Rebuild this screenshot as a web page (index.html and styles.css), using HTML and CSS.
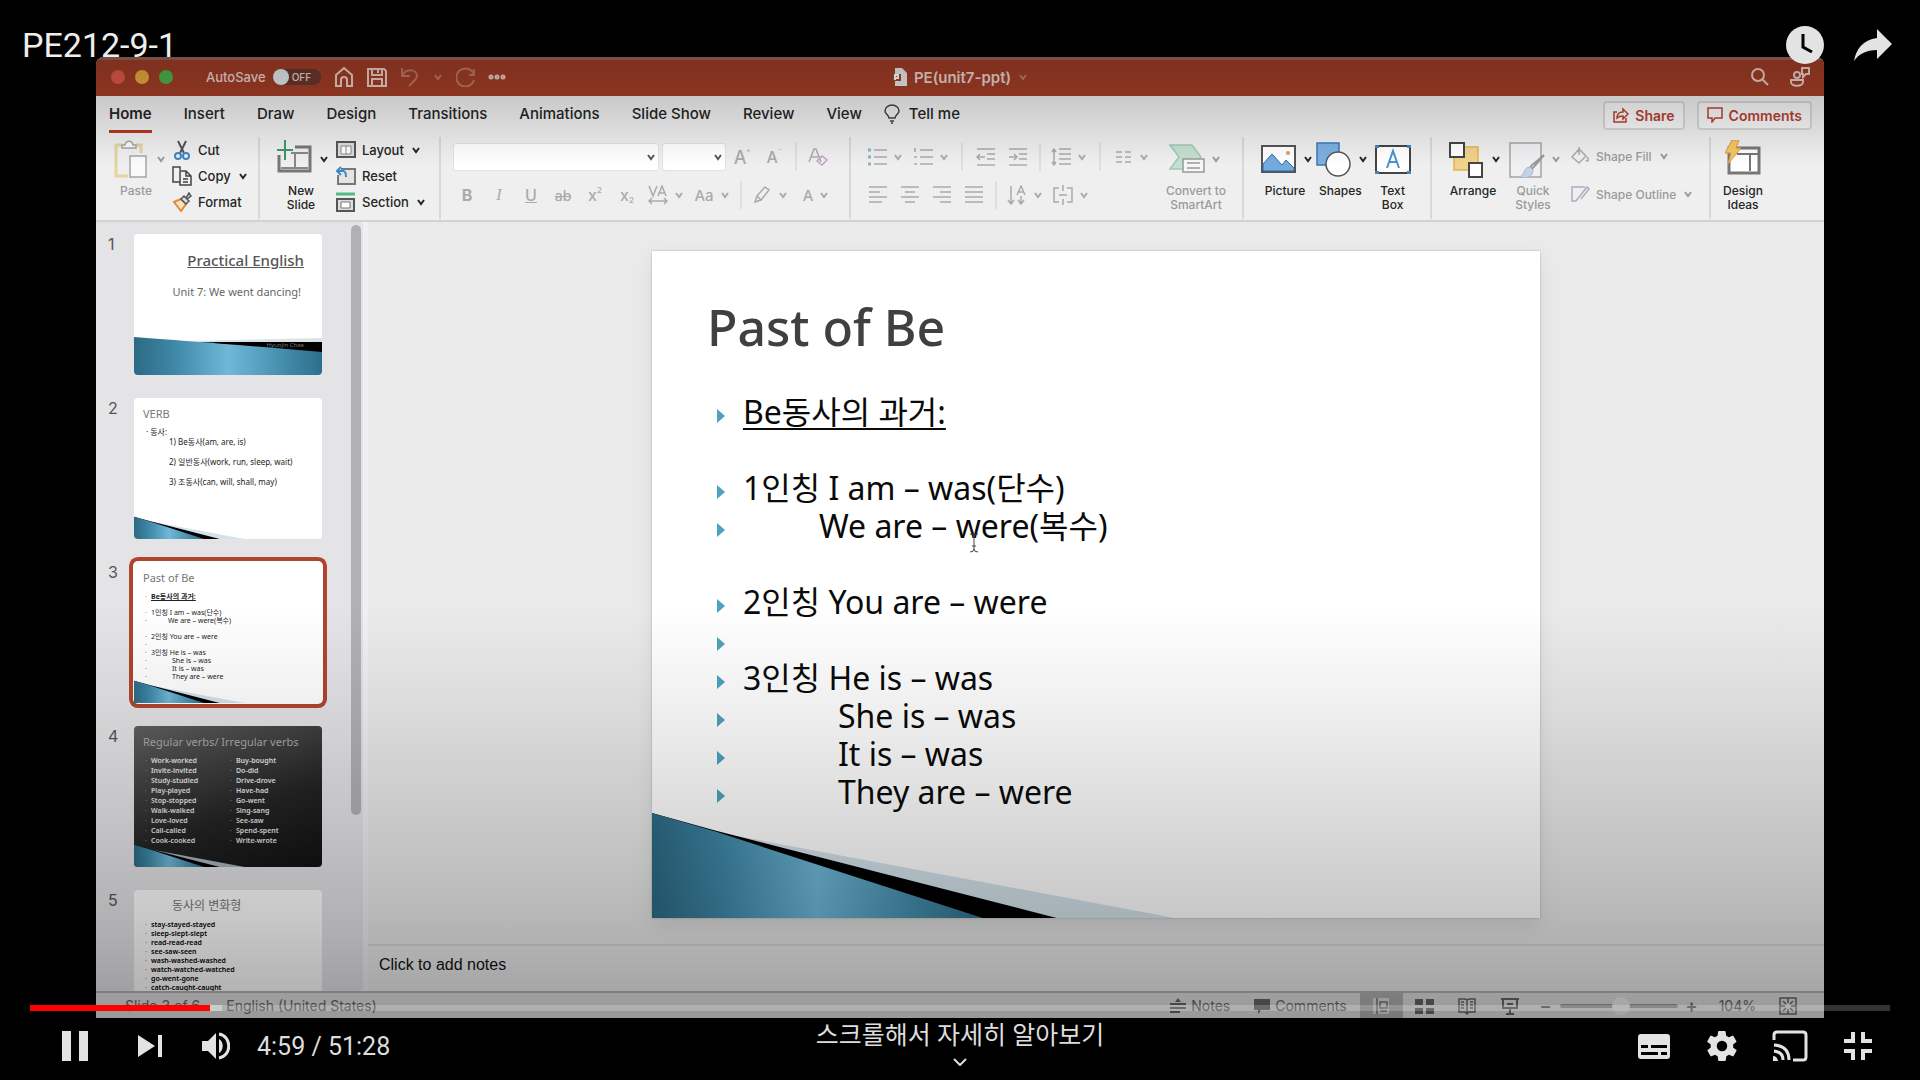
FILE: index.html
```html
<!DOCTYPE html>
<html lang="ko">
<head>
<meta charset="utf-8">
<title>PE212-9-1</title>
<link rel="stylesheet" href="styles.css">
</head>
<body>
<svg class="defs" aria-hidden="true">
  <symbol id="chev" viewBox="0 0 10 10"><path d="M2 3l3 4 3-4" fill="none" stroke="currentColor" stroke-width="2"/></symbol>
  <linearGradient id="sea"><stop offset="0" stop-color="#2c6a84"/><stop offset=".22" stop-color="#3f88a8"/><stop offset=".5" stop-color="#70b8d8"/><stop offset=".8" stop-color="#438caa"/><stop offset="1" stop-color="#2c6f8c"/></linearGradient>
  <symbol id="wedge" viewBox="0 0 888 667" preserveAspectRatio="none">
    <path d="M80 584L523 667H300z" fill="#c9dbe6" opacity=".8"/>
    <path d="M0 562L65 580L405 667H300L0 570z" fill="#000"/>
    <path d="M0 562L65 581L331 667H0z" fill="url(#sea)"/>
  </symbol>
</svg>
<main class="player">
  <section class="app">
    <header class="titlebar">
      <div class="left">
        <div class="lights"><i class="red"></i><i class="amber"></i><i class="green"></i></div>
        <div class="quick">
          <span class="autosave">AutoSave</span>
          <button class="toggle"><i></i>OFF</button>
          <svg class="i20 home" viewBox="0 0 20 20"><path d="M2 8l8-7 8 7v11h-5v-6a3 3 0 0 0-6 0v6H2z"/></svg>
          <svg class="i20" viewBox="0 0 20 20"><path d="M1 2h16l2 2v15H1zM5 2v6h10V2M5 19v-7h10v7M11 3v3"/></svg>
          <svg class="i20 dim undo" viewBox="0 0 20 20"><path d="M2 1v8h8M2 9c4-8 15-7 15 0 0 3-4 6-8 10"/></svg>
          <svg class="chev dim"><use href="#chev"/></svg>
          <svg class="i20 dim redo" viewBox="0 0 20 20"><path d="M18 2v6h-5M18 8a9 9 0 1 0 0 5"/></svg>
          <svg class="i20 dots" viewBox="0 0 20 20"><circle cx="4" cy="10" r="1"/><circle cx="10" cy="10" r="1"/><circle cx="16" cy="10" r="1"/></svg>
        </div>
      </div>
      <div class="doc">
        <svg class="docicon" viewBox="0 0 14 20"><path d="M2 1h7l5 5v13H2z" fill="#eee"/><path d="M0 7h8v7H0z" fill="#a8482e"/><path d="M2 13V8h3v3H2" fill="none" stroke="#fff"/></svg>
        <span>PE(unit7-ppt)</span><svg class="chev dim"><use href="#chev"/></svg>
      </div>
      <div class="find">
        <svg class="i20" viewBox="0 0 20 20"><circle cx="8" cy="8" r="6"/><path d="M12 12l6 6"/></svg>
        <svg class="i20" viewBox="0 0 20 20"><circle cx="7" cy="8" r="3"/><path d="M1 13h12v2c0 5-12 5-12 0zM12 1h7v6h-3l-3 3V7h-1z"/></svg>
      </div>
    </header>

    <nav class="tabs">
      <a href="#" class="on">Home</a><a href="#">Insert</a><a href="#">Draw</a><a href="#">Design</a><a href="#">Transitions</a><a href="#">Animations</a><a href="#">Slide Show</a><a href="#">Review</a><a href="#">View</a>
      <a href="#" class="tell"><svg class="bulb" viewBox="0 0 16 20"><path d="M5 14c0-3-4-4-4-7a7 6 0 0 1 14 0c0 3-4 4-4 7zM6 17h4M7 19h2"/></svg>Tell me</a>
      <div class="actions">
        <button><svg class="i16" viewBox="0 0 16 16"><path d="M4 5H1v10h12v-4M4 11c0-5 3-6 6-6V2l5 5-5 5V9C8 9 6 9 4 11z"/></svg>Share</button>
        <button><svg class="i16" viewBox="0 0 16 16"><path d="M1 1h14v10H8l-3 4v-4H1z"/></svg>Comments</button>
      </div>
    </nav>

    <div class="ribbon">
      <div class="group clip">
        <button class="big pale paste"><span class="art"><svg viewBox="0 0 36 38"><path d="M8 5H2v31h12M22 5h5v8" fill="none" stroke="#e3d4a0" stroke-width="3"/><path d="M8 8V5h3c1-5 7-5 8 0h3v3zM16 16h16v21H16z" fill="#fafafa" stroke="#a5a5a5" stroke-width="1.5"/></svg><svg class="chev"><use href="#chev"/></svg></span><span>Paste</span></button>
        <div class="stack">
          <button><svg viewBox="0 0 20 20"><path d="M6 1l6 12M14 1L8 13" fill="none" stroke="#555" stroke-width="2"/><circle cx="6" cy="16" r="3" fill="none" stroke="#3f86c4" stroke-width="2"/><circle cx="14" cy="16" r="3" fill="none" stroke="#3f86c4" stroke-width="2"/></svg>Cut</button>
          <button><svg viewBox="0 0 20 20"><path d="M8 16H1V1h7v3M8 5h6l5 5v9H8zM14 5v5h5M11 13h5M11 16h5" fill="none" stroke="#444" stroke-width="1.5"/></svg>Copy<svg class="chev"><use href="#chev"/></svg></button>
          <button><svg viewBox="0 0 20 20"><path d="M2 10l7-3 5 5-5 7z" fill="#fbe0c4" stroke="#e08b3e" stroke-width="2"/><path d="M9 7l3-3 2 2 3-5 2 3-4 3 2 2-3 3z" fill="#ddd" stroke="#555" stroke-width="1.5"/></svg>Format</button>
        </div>
      </div>
      <div class="group slides">
        <button class="big"><span class="art"><svg viewBox="0 0 36 38"><path d="M18 7h15v24H2V15" fill="none" stroke="#777" stroke-width="3"/><path d="M14 13h17M18 14v15M4 28h27" stroke="#888" stroke-width="2"/><path d="M8 0v20M0 10h16" stroke="#3c9a68" stroke-width="2"/></svg><svg class="chev"><use href="#chev"/></svg></span><span>New<br>Slide</span></button>
        <div class="stack">
          <button><svg viewBox="0 0 20 20"><path d="M1 2h18v15H1z" fill="#ddd" stroke="#555" stroke-width="2"/><path d="M5 6h10v8H5zM10 6v8" fill="#fff" stroke="#888"/></svg>Layout<svg class="chev"><use href="#chev"/></svg></button>
          <button><svg viewBox="0 0 20 20"><path d="M5 3h14v15H2V9" fill="#e4e4e4" stroke="#777" stroke-width="2"/><path d="M5 1L1 5l4 4M1 5h6c3 0 3 3 3 6" fill="none" stroke="#3f86c4" stroke-width="2"/></svg>Reset</button>
          <button><svg viewBox="0 0 20 20"><path d="M0 2h19" stroke="#58b883" stroke-width="3"/><path d="M1 7h17v12H1z" fill="#ddd" stroke="#555" stroke-width="2"/><path d="M5 10h9v6H5z" fill="#fff" stroke="#777"/></svg>Section<svg class="chev"><use href="#chev"/></svg></button>
        </div>
      </div>
      <div class="group font pale">
        <div class="row">
          <span class="combo name"><select aria-label="Font"><option></option></select><svg class="chev"><use href="#chev"/></svg></span>
          <span class="combo size"><select aria-label="Font size"><option></option></select><svg class="chev"><use href="#chev"/></svg></span>
          <button class="t large">A<sup>^</sup></button><button class="t">A<sup>ˇ</sup></button><i class="sep"></i>
          <button class="t"><svg viewBox="0 0 20 20"><path d="M1 15L6 2h2l5 13M3 10h7"/><path d="M9 14l5-5 5 4-5 5z" stroke="#c3a2c8"/></svg></button>
        </div>
        <div class="row">
          <button class="t"><b>B</b></button><button class="t serif"><em>I</em></button><button class="t"><u>U</u></button><button class="t small"><s>ab</s></button><button class="t">x<sup>2</sup></button><button class="t">x<sub>2</sub></button>
          <button class="d"><svg class="ic" viewBox="0 0 20 20"><path d="M1 1l4 10L9 1M10 11l4-10 4 10M11 8h6M1 16h18M4 13l-3 3 3 3M16 13l3 3-3 3"/></svg><svg class="chev"><use href="#chev"/></svg></button>
          <button class="d">Aa<svg class="chev"><use href="#chev"/></svg></button><i class="sep"></i>
          <button class="d"><svg class="ic" viewBox="0 0 20 20"><path d="M3 17l2-6 8-9 4 3-8 10zM5 11l4 4"/></svg><svg class="chev"><use href="#chev"/></svg></button>
          <button class="d">A<svg class="chev"><use href="#chev"/></svg></button>
        </div>
      </div>
      <div class="group para pale">
        <div class="rows">
          <div class="row">
            <button class="d"><svg class="ic" viewBox="0 0 20 20"><path d="M7 3h13M7 10h13M7 17h13"/><path d="M1 3h3M1 10h3M1 17h3" stroke="#8bb5bd" stroke-width="3"/></svg><svg class="chev"><use href="#chev"/></svg></button>
            <button class="d"><svg class="ic" viewBox="0 0 20 20"><path d="M7 3h13M7 10h13M7 17h13M2 1v4M1 10h3M1 17h3"/></svg><svg class="chev"><use href="#chev"/></svg></button><i class="sep wide"></i>
            <button class="t"><svg viewBox="0 0 20 20"><path d="M1 2h18M11 7h8M11 12h8M1 18h18M9 10H1M4 7l-3 3 3 3"/></svg></button>
            <button class="t"><svg viewBox="0 0 20 20"><path d="M1 2h18M11 7h8M11 12h8M1 18h18M1 10h8M6 7l3 3-3 3"/></svg></button><i class="sep"></i>
            <button class="d"><svg class="ic" viewBox="0 0 20 20"><path d="M8 2h12M8 7h12M8 12h12M8 17h12M3 2v16M1 5l2-3 2 3M1 15l2 3 2-3"/></svg><svg class="chev"><use href="#chev"/></svg></button><i class="sep wide"></i>
            <button class="d"><svg class="ic" viewBox="0 0 20 20"><path d="M3 5h6M3 10h6M3 15h6M12 5h6M12 10h6M12 15h6"/></svg><svg class="chev"><use href="#chev"/></svg></button>
          </div>
          <div class="row aligns">
            <button class="t"><svg viewBox="0 0 20 20"><path d="M1 2h18M1 7h11M1 12h18M1 17h13"/></svg></button>
            <button class="t"><svg viewBox="0 0 20 20"><path d="M1 2h18M5 7h10M1 12h18M5 17h10"/></svg></button>
            <button class="t"><svg viewBox="0 0 20 20"><path d="M1 2h18M8 7h11M1 12h18M8 17h11"/></svg></button>
            <button class="t"><svg viewBox="0 0 20 20"><path d="M1 2h18M1 7h18M1 12h18M1 17h18"/></svg></button><i class="sep"></i>
            <button class="d"><svg class="ic" viewBox="0 0 20 20"><path d="M4 1v17M1 15l3 4 3-4M14 11v8M11 15l3 4 3-4M10 10l4-9 4 9M12 7h4"/></svg><svg class="chev"><use href="#chev"/></svg></button>
            <button class="d"><svg class="ic" viewBox="0 0 20 20"><path d="M6 3H1v14h5M14 3h5v14h-5M10 0v6M10 14v6M6 10h8"/></svg><svg class="chev"><use href="#chev"/></svg></button>
          </div>
        </div>
        <button class="big smart"><span class="art"><svg viewBox="0 0 36 38"><path d="M1 5h22l9 12-9 12H1l9-12z" fill="#c4e0d0" stroke="#9ec9b1" stroke-width="1.5"/><path d="M14 19h21v13H14zM18 23h13M18 28h13" fill="#f6f6f6" stroke="#999" stroke-width="1.5"/></svg><svg class="chev"><use href="#chev"/></svg></span><span>Convert to<br>SmartArt</span></button>
      </div>
      <div class="group insert">
        <button class="big"><span class="art"><svg viewBox="0 0 36 38"><path d="M1 6h33v26H1z" fill="#fff" stroke="#555" stroke-width="2"/><path d="M2 24l9-10 10 11 4-5 8 8v3H2z" fill="#72abdf" stroke="#2f6ba5"/><circle cx="27" cy="13" r="2" fill="#e09a55"/></svg><svg class="chev"><use href="#chev"/></svg></span><span>Picture</span></button>
        <button class="big"><span class="art"><svg viewBox="0 0 36 38"><path d="M1 3h22v22H1z" fill="#7db0e2" stroke="#3879b5" stroke-width="1.5"/><circle cx="22" cy="24" r="12" fill="#fff" stroke="#555" stroke-width="1.5"/></svg><svg class="chev"><use href="#chev"/></svg></span><span>Shapes</span></button>
        <button class="big solo"><span class="art"><svg viewBox="0 0 36 38"><path d="M1 6h34v27H1z" fill="#fff" stroke="#444" stroke-width="2"/><path d="M0 5h4v3H0zM32 5h4v3h-4zM0 31h4v3H0zM32 31h4v3h-4z" fill="#3f86c4"/><path d="M12 28l6-17 6 17M14 22h8" fill="none" stroke="#4991d0" stroke-width="2"/></svg></span><span>Text<br>Box</span></button>
      </div>
      <div class="group draw">
        <button class="big"><span class="art"><svg viewBox="0 0 36 38"><path d="M5 7h24v23H5z" fill="#f0d28a" stroke="#e3b34f" stroke-width="1.5"/><path d="M1 3h14v14H1zM20 23h13v14H20z" fill="#fff" stroke="#444" stroke-width="2"/></svg><svg class="chev"><use href="#chev"/></svg></span><span>Arrange</span></button>
        <button class="big pale"><span class="art"><svg viewBox="0 0 36 38"><path d="M1 3h31v34H1z" fill="#f0f0f3" stroke="#a5a5a5" stroke-width="1.5"/><path d="M35 15L24 28l-3 1 1-3z" fill="#fff" stroke="#999" stroke-width="2"/><path d="M21 27c-7 0-4 8-11 10 7 2 14 0 14-7z" fill="#c4d2e6" stroke="#a6b4cb"/></svg><svg class="chev"><use href="#chev"/></svg></span><span>Quick<br>Styles</span></button>
        <div class="stack shape pale">
          <button><svg viewBox="0 0 20 20"><path d="M9 3l7 7-7 7-7-6zM9 1v8M17 11c3 4 0 5-1 3" fill="none" stroke="#aaa" stroke-width="1.5"/></svg>Shape Fill<svg class="chev"><use href="#chev"/></svg></button>
          <button><svg viewBox="0 0 20 20"><path d="M15 3H2v14h4l11-14 2 2-8 10" fill="none" stroke="#aab0bd" stroke-width="1.5"/></svg>Shape Outline<svg class="chev"><use href="#chev"/></svg></button>
        </div>
      </div>
      <div class="group ideas">
        <button class="big solo"><span class="art"><svg viewBox="0 0 36 38"><path d="M4 8h30v25H4z" fill="#fff" stroke="#777" stroke-width="3"/><path d="M12 14h21M25 15v16" stroke="#777" stroke-width="2"/><path d="M7 0h7l-3 8h5L3 24l3-11H0z" fill="#f6c667" stroke="#df983e"/></svg></span><span>Design<br>Ideas</span></button>
      </div>
    </div>

    <div class="work">
      <aside class="thumbs">
        <ol>
          <li><span>1</span><div class="mini first"><h3>Practical English</h3><p>Unit 7: We went dancing!</p>
            <svg class="wedge" viewBox="0 0 188 141" preserveAspectRatio="none"><path d="M50 107l138-3v6H60z" fill="#dce3e6"/><path d="M60 108h128v12z" fill="#000"/><path d="M0 103Q70 108 188 118v23H0z" fill="url(#sea)"/></svg><small>Hyunjin Chae</small></div></li>
          <li><span>2</span><div class="mini verb"><h3>VERB</h3><p>· 동사:</p><p class="in">1) Be동사(am, are, is)</p><p class="in">2) 일반동사(work, run, sleep, wait)</p><p class="in">3) 조동사(can, will, shall, may)</p><svg class="wedge"><use href="#wedge"/></svg></div></li>
          <li><span>3</span><div class="mini past current"><h3>Past of Be</h3><ul><li><b><u>Be동사의 과거:</u></b></li><li class="gap">1인칭 I am – was(단수)</li><li class="we">We are – were(복수)</li><li class="gap">2인칭 You are – were</li><li></li><li>3인칭 He is – was</li><li class="she">She is – was</li><li class="she">It is – was</li><li class="she">They are – were</li></ul><svg class="wedge"><use href="#wedge"/></svg></div></li>
          <li><span>4</span><div class="mini dark"><h3>Regular verbs/ Irregular verbs</h3><div class="cols"><ul><li>Work-worked</li><li>Invite-invited</li><li>Study-studied</li><li>Play-played</li><li>Stop-stopped</li><li>Walk-walked</li><li>Love-loved</li><li>Call-called</li><li>Cook-cooked</li></ul><ul><li>Buy-bought</li><li>Do-did</li><li>Drive-drove</li><li>Have-had</li><li>Go-went</li><li>Sing-sang</li><li>See-saw</li><li>Spend-spent</li><li>Write-wrote</li></ul></div><svg class="wedge"><use href="#wedge"/></svg></div></li>
          <li><span>5</span><div class="mini forms"><h3>동사의 변화형</h3><ul><li>stay-stayed-stayed</li><li>sleep-slept-slept</li><li>read-read-read</li><li>see-saw-seen</li><li>wash-washed-washed</li><li>watch-watched-watched</li><li>go-went-gone</li><li>catch-caught-caught</li></ul></div></li>
        </ol>
        <i class="scroll"></i>
      </aside>
      <div class="stage">
        <div class="canvas">
          <article class="slide">
            <svg class="wedge"><use href="#wedge"/></svg>
            <h1>Past of Be</h1>
            <ul>
              <li><u>Be동사의 과거:</u></li>
              <li class="gap">1인칭 I am – was(단수)</li>
              <li class="we">We are – were(복수)</li>
              <li class="gap">2인칭 You are – were</li>
              <li></li>
              <li>3인칭 He is – was</li>
              <li class="she">She is – was</li>
              <li class="she">It is – was</li>
              <li class="she">They are – were</li>
            </ul>
            <svg class="cursor" viewBox="0 0 10 20"><path d="M1 1q4 0 4 3v12q0 3-4 3M9 1Q5 1 5 4M5 16q0 3 4 3M3 13h4" fill="none" stroke="#444"/></svg>
          </article>
        </div>
        <p class="notes">Click to add notes</p>
      </div>
    </div>

    <footer class="status">
      <span>Slide 3 of 6</span><span>English (United States)</span>
      <div class="views">
        <button class="lab"><svg class="i16" viewBox="0 0 16 16"><path d="M0 6h16M0 10h16M0 14h10" fill="none" stroke="currentColor" stroke-width="2"/><path d="M5 4l3-4 3 4z"/></svg>Notes</button>
        <button class="lab com"><svg class="i16" viewBox="0 0 16 16"><path d="M0 1h16v11H7l-3 4v-4H0z"/></svg>Comments</button>
        <button class="view on" aria-label="Normal"><svg viewBox="0 0 20 20"><path d="M2 2h16v16H2z" fill="#ddd"/><path d="M6 2v16M9 6h7v6H9zM9 15h7" fill="none" stroke="#777" stroke-width="1.5"/></svg></button>
        <button class="view" aria-label="Slide sorter"><svg viewBox="0 0 20 20"><path d="M1 3h8v6H1zM12 3h8v6h-8zM1 12h8v6H1zM12 12h8v6h-8z"/></svg></button>
        <button class="view" aria-label="Reading view"><svg viewBox="0 0 20 20"><path d="M2 3h6l2 1 2-1h6v13h-6l-2 2-2-2H2zM10 4v13M4 6h3M4 9h3M4 12h3M13 6h3M13 9h3M13 12h3" fill="none" stroke="currentColor" stroke-width="1.5"/></svg></button>
        <button class="view" aria-label="Slide show"><svg viewBox="0 0 20 20"><path d="M1 3h18M3 3v9h14V3M7 8h6M10 12v6M6 18h8" fill="none" stroke="currentColor" stroke-width="2"/></svg></button>
        <button class="zoom" aria-label="Zoom out">−</button><input type="range" aria-label="Zoom" value="52"><button class="zoom" aria-label="Zoom in">+</button>
        <span class="pct">104%</span>
        <svg class="fit" viewBox="0 0 20 20"><path d="M2 2h16v16H2zM10 2v5M10 13v5M2 10h5M13 10h5M5 5l3 3M15 5l-3 3M5 15l3-3M15 15l-3-3" fill="none" stroke="currentColor" stroke-width="1.5"/></svg>
      </div>
    </footer>
  </section>

  <section class="chrome">
    <header class="top">
      <h2>PE212-9-1</h2>
      <button aria-label="Watch later"><svg viewBox="0 0 38 38"><circle cx="19" cy="19" r="19"/><path d="M17 8v13l9 5" fill="none" stroke="#000" stroke-width="3"/></svg></button>
      <button aria-label="Share"><svg viewBox="0 0 38 38"><path d="M23 3l15 15-15 15v-9C12 24 5 28 0 35c2-12 9-21 23-23z"/></svg></button>
    </header>
    <div class="bottom">
      <div class="progress"><i class="loaded"></i><i class="played"></i></div>
      <div class="controls">
        <div class="side">
          <button class="pause" aria-label="Pause"><svg viewBox="0 0 26 30"><path d="M0 0h9v30H0zM17 0h9v30h-9z"/></svg></button>
          <button class="next" aria-label="Next"><svg viewBox="0 0 24 24"><path d="M0 1l17 11L0 23zM20 1h4v22h-4z"/></svg></button>
          <button class="vol" aria-label="Mute"><svg viewBox="0 0 28 28"><path d="M0 9h6l8-8v26l-8-8H0zM17 7c5 3 5 11 0 14z"/><path d="M17 2c13 2 13 22 0 24" fill="none" stroke="#e3e3e3" stroke-width="3"/></svg></button>
          <span class="time">4:59 / 51:28</span>
        </div>
        <button class="more">스크롤해서 자세히 알아보기<svg viewBox="0 0 14 8"><path d="M1 1l6 6 6-6" fill="none" stroke="#ddd" stroke-width="2"/></svg></button>
        <div class="side right">
          <button aria-label="Subtitles"><svg viewBox="0 0 36 36"><path fill-rule="evenodd" d="M5 6h26q3 0 3 3v19q0 3-3 3H5q-3 0-3-3V9q0-3 3-3zM5 17v3h7v-3zM15 17v3h16v-3zM5 24v3h17v-3zM25 24v3h6v-3z"/></svg></button>
          <button aria-label="Settings"><svg viewBox="0 0 24 24"><path d="M19.4 13a7.500 7.500 0 0 0 0-2l2.100-1.600a.5.5 0 0 0 .1-.6l-2-3.500a.5.5 0 0 0-.6-.2l-2.500 1a7.300 7.300 0 0 0-1.700-1l-.4-2.600a.5.5 0 0 0-.5-.5h-4a.5.5 0 0 0-.5.5L9 5.100a7.300 7.300 0 0 0-1.700 1l-2.500-1a.5.5 0 0 0-.6.2l-2 3.500a.5.5 0 0 0 .1.600L4.500 11a7.500 7.500 0 0 0 0 2l-2.100 1.600a.5.5 0 0 0-.1.600l2 3.500c.1.200.4.300.6.200l2.500-1a7.300 7.300 0 0 0 1.700 1l.4 2.600c0 .3.200.5.500.5h4c.3 0 .5-.2.5-.5l.4-2.600a7.300 7.300 0 0 0 1.700-1l2.500 1c.2.100.5 0 .6-.2l2-3.500a.5.5 0 0 0-.1-.6zM12 15.500a3.500 3.500 0 1 1 0-7 3.500 3.500 0 0 1 0 7z"/></svg></button>
          <button aria-label="Play on TV"><svg viewBox="0 0 36 36"><path d="M2 12V7q0-3 3-3h26q3 0 3 3v22q0 3-3 3H21M2 17q15 1 15 15M2 23q9 1 9 9" fill="none" stroke="#e3e3e3" stroke-width="3"/><path d="M1 28q4 0 5 5H1z"/></svg></button>
          <button aria-label="Exit full screen"><svg viewBox="0 0 36 36"><path d="M11 4h4v11H4v-4h7zM21 4h4v7h7v4H21zM4 21h11v11h-4v-7H4zM21 21h11v4h-7v7h-4z"/></svg></button>
        </div>
      </div>
    </div>
  </section>
</main>
</body>
</html>
```
FILE: styles.css
```css
* { box-sizing: border-box; margin: 0; padding: 0; }
body { background: #000; font-family: Inter, "Noto Sans CJK KR", sans-serif; }
button { background: none; border: 0; font: inherit; color: inherit; }
a { color: inherit; text-decoration: none; }
ul, ol { list-style: none; }
i { font-style: normal; }
.defs { position: absolute; width: 0; height: 0; }
.chev { width: 10px; height: 10px; flex: none; }
.dim { opacity: .4; }
.i20 { width: 20px; height: 20px; }
.i16 { width: 16px; height: 16px; }

.player { display: grid; height: 100vh; overflow: hidden; }
.app, .chrome { grid-area: 1 / 1; min-width: 0; min-height: 0; }
.app { margin: 57px 5% 62px; display: flex; flex-direction: column; background: #e9e9e9; overflow: hidden; border-radius: 8px 8px 0 0; }

/* window title bar */
.titlebar { height: 39px; display: grid; grid-template-columns: 1fr auto 1fr; align-items: center; background: #a43e27; border-top: 3px solid #9c6456; padding: 0 14px 2px 15px; color: #efd8d1; }
.titlebar svg { fill: none; stroke: #efd0c6; stroke-width: 2; }
.titlebar div { display: flex; align-items: center; }
.lights { gap: 10px; }
.lights i { width: 14px; height: 14px; border-radius: 50%; }
.red { background: #e4584c; } .amber { background: #edac3d; } .green { background: #4cb84c; }
.quick { padding-left: 33px; gap: 13px; font-size: 13px; font-weight: 500; }
.toggle { display: flex; align-items: center; gap: 3px; width: 48px; height: 16px; border-radius: 8px; background: #6c382c; font-size: 10px; margin-left: -6px; }
.toggle i { width: 16px; height: 16px; border-radius: 50%; background: #e8eef2; }
.titlebar .quick .dots { stroke-width: 3; margin-left: -2px; }
.doc { gap: 7px; font-size: 15px; font-weight: 600; }
.titlebar .docicon { width: 14px; height: 20px; stroke: none; }
.find { justify-content: flex-end; gap: 20px; }

/* ribbon tabs */
.tabs { height: 41px; display: flex; align-items: center; gap: 32px; padding: 0 12px 0 13px; background: #efefef; font-size: 15px; font-weight: 500; color: #252525; }
.tabs a { height: 33px; line-height: 28px; border-bottom: 3px solid transparent; }
.tabs .on { font-weight: 600; border-color: #b23a20; }
.tabs .tell { display: flex; align-items: center; gap: 9px; margin-left: -10px; padding-bottom: 3px; }
.bulb { width: 16px; height: 20px; fill: none; stroke: #444; stroke-width: 1.500; }
.actions { margin-left: auto; display: flex; gap: 12px; }
.actions button { height: 29px; display: flex; align-items: center; gap: 6px; padding: 0 8px; border: 2px solid #d6d6d6; border-radius: 4px; background: #f6f6f6; color: #b44132; font-size: 14px; font-weight: 600; margin-top: -3px; }
.actions svg { fill: none; stroke: #b44132; stroke-width: 1.500; }

/* ribbon groups */
.ribbon { height: 85px; flex: none; display: grid; grid-template-columns: 164fr 181fr 410fr 393fr 188fr 279fr 113fr; padding-bottom: 9px; background: #efefef; border-bottom: 2px solid #d2d2d2; font-size: 13px; font-weight: 500; color: #252525; white-space: nowrap; }
.group { display: flex; border-right: 2px solid #d8d8d8; min-width: 0; }
.group:last-child { border: 0; }
.pale { color: #9a9a9a; }
.big { display: flex; flex-direction: column; align-items: flex-start; width: 60px; font-size: 12px; line-height: 14px; padding-top: 3px; }
.art { display: flex; align-items: center; gap: 6px; height: 38px; margin-bottom: 6px; }
.art svg:first-child { width: 36px; height: 38px; }
.big > span:last-child { width: 48px; text-align: center; }
.big.paste > span:last-child { width: 44px; }
.big.solo > span:last-child { width: 36px; display: flex; justify-content: center; }
.clip { padding-left: 18px; }
.slides { padding-left: 17px; }
.insert { padding-left: 17px; }
.insert .solo { margin-left: 3px; }
.draw { padding-left: 17px; }
.ideas { padding-left: 14px; }
.slides .stack { margin-left: -1px; }
.clip .stack { margin-left: -2px; }
.stack button { display: flex; align-items: center; gap: 6px; height: 26px; }
.stack svg:first-child { width: 20px; height: 20px; }
.stack .chev { margin-left: 1px; }
.shape { padding: 6px 0 0 1px; }
.shape button { margin-bottom: 12px; font-size: 12px; }
.font { flex-direction: column; gap: 10px; padding: 6px 0 0 10px; }
.row { display: flex; align-items: center; height: 28px; }
.combo { position: relative; display: block; height: 28px; }
.combo select { appearance: none; width: 100%; height: 28px; background: #fff; border: 1px solid #e2e2e2; border-radius: 3px; }
.combo .chev { position: absolute; right: 3px; top: 9px; color: #555; }
.name { width: 206px; margin: 0 3px 0 2px; }
.size { width: 64px; }
.t { width: 32px; height: 28px; display: flex; align-items: center; justify-content: center; font-size: 16px; color: #aaa; }
.t.small { font-size: 14px; }
.t.large { font-size: 18px; }
.serif { font-family: "Liberation Serif", serif; }
.t sup, .t sub { font-size: 8px; }
.t sup { margin-bottom: 10px; } .t sub { margin-top: 10px; }
.d { width: 46px; height: 28px; display: flex; align-items: center; justify-content: center; gap: 6px; font-size: 15px; color: #aaa; }
.t svg, .row .ic { width: 20px; height: 20px; fill: none; stroke: #aaa; stroke-width: 1.500; }
.sep { width: 2px; height: 28px; margin: 0 5px; background: #dfdfdf; }
.sep.wide { margin: 0 7px; }
.rows { display: flex; flex-direction: column; gap: 10px; padding: 6px 0 0 11px; width: 318px; flex: none; }
.smart > span:last-child, .big.smart > span:last-child { width: 66px; margin-left: -6px; }

/* workspace */
.work { flex: 1; min-height: 0; display: flex; }
.thumbs { width: 272px; flex: none; position: relative; overflow: hidden; background: #e4e3e6; border-right: 5px solid #f0f0f2; }
.thumbs ol { padding: 12px 0 0 12px; display: grid; gap: 23px; }
.thumbs ol > li { display: flex; gap: 14px; font-size: 16px; color: #555; }
.thumbs li > span { width: 12px; }
.scroll { position: absolute; right: 2px; top: 3px; width: 10px; height: 590px; border-radius: 5px; background: #b1b1b3; }
.mini { width: 188px; height: 141px; position: relative; overflow: hidden; border-radius: 4px; background: #fff; padding: 8px 9px; font-family: "Noto Sans", "Noto Sans CJK KR", sans-serif; color: #222; font-size: 7px; line-height: 8px; }
.mini > *:not(.wedge) { position: relative; }
.mini h3 { font-size: 11px; line-height: 16px; font-weight: 400; color: #777; }
.wedge { position: absolute; left: 0; top: 0; width: 100%; height: 100%; }
.first { text-align: right; padding: 16px 18px; }
.first h3 { font-size: 15px; line-height: 20px; font-weight: 500; color: #555; text-decoration: underline; }
.first p { font-size: 11px; line-height: 16px; padding: 14px 3px 0 0; color: #666; }
.first small { display: block; font-size: 6px; padding-top: 41px; color: #777; }
.verb p { font-size: 8px; line-height: 10px; padding-left: 3px; }
.verb h3 { margin-bottom: 5px; }
.verb .in { padding-left: 26px; margin-bottom: 10px; }
.current { overflow: visible; box-shadow: 0 0 0 1px #fff, 0 0 0 5px #b0452f; }
.past h3 { margin-bottom: 7px; }
.past li, .dark li, .forms li { position: relative; min-height: 8px; padding-left: 8px; }
.past .gap { margin-top: 8px; } .past .we { padding-left: 25px; } .past .she { padding-left: 29px; }
.past li::before, .dark li::before, .forms li::before { content: "·"; position: absolute; left: 2px; color: #888; }
.dark { background: linear-gradient(160deg, #606060, #242424 60%, #111); color: #e6e6e6; }
.dark h3 { color: #aaa; margin-bottom: 6px; white-space: nowrap; }
.cols { display: grid; grid-template-columns: 1fr 1fr; line-height: 10px; font-weight: 600; }
.forms h3 { font-size: 12px; padding-left: 29px; margin-bottom: 6px; }
.forms ul { line-height: 9px; font-weight: 600; color: #000; }
.stage { flex: 1; min-width: 0; display: flex; flex-direction: column; }
.canvas { flex: 1; min-height: 0; padding-top: 29px; background: #eaeaea; }
.slide { position: relative; width: 61%; aspect-ratio: 888 / 667; margin: 0 auto; padding: 46px 55px; background: #fff; box-shadow: 0 0 2px #aaa, 0 8px 18px rgba(0, 0, 0, .08); font-family: "Noto Sans", "Noto Sans CJK KR", sans-serif; }
.slide h1 { position: relative; font-size: 50px; line-height: 60px; font-weight: 500; color: #404040; margin-bottom: 36px; }
.slide ul { position: relative; font-size: 32px; line-height: 38px; color: #0a0a0a; }
.slide li { position: relative; min-height: 38px; padding-left: 36px; }
.slide li::before { content: ""; position: absolute; left: 10px; top: 16px; border-left: 8px solid #4da3bd; border-top: 7px solid transparent; border-bottom: 7px solid transparent; }
.slide u { text-decoration-thickness: 2px; text-underline-offset: 4px; }
.slide .gap { margin-top: 38px; }
.slide .we { padding-left: 112px; } .slide .she { padding-left: 131px; }
.cursor { position: absolute; left: 317px; top: 282px; width: 10px; height: 20px; }
.notes { height: 47px; padding-left: 11px; border-top: 2px solid #dadada; background: #ececec; font: 16px/38px "Liberation Sans", sans-serif; color: #111; }
.status { height: 27px; flex: none; display: flex; align-items: center; gap: 26px; padding: 0 26px 0 29px; border-top: 2px solid #b4b4b4; background: #e2e2e2; color: #666; font-size: 14px; }
.status svg { fill: currentColor; }
.views { margin-left: auto; display: flex; align-items: center; height: 25px; }
.lab { display: flex; align-items: center; gap: 5px; font-size: 14px; }
.com { margin: 0 13px 0 24px; }
.view { width: 43px; height: 25px; display: grid; place-items: center; }
.view svg, .fit { width: 20px; height: 20px; }
.view.on { background: #b2b2b2; }
.zoom { width: 20px; font-size: 18px; font-weight: 600; line-height: 20px; margin: 0 4px; }
.views input { appearance: none; width: 118px; height: 4px; background: #9b9b9b; border-radius: 2px; }
.views input::-webkit-slider-thumb { appearance: none; width: 18px; height: 18px; border-radius: 50%; background: #f2f2f2; }
.pct { margin: 0 22px 0 13px; font-size: 14px; }

/* player chrome laid over the video */
.chrome { position: relative; display: flex; flex-direction: column; justify-content: space-between; color: #e3e3e3; fill: #e3e3e3; background: linear-gradient(rgba(0, 0, 0, .32), rgba(0, 0, 0, .16) 96px, transparent 165px), linear-gradient(transparent 56%, rgba(0, 0, 0, .06) 65%, rgba(0, 0, 0, .17) 79%, rgba(0, 0, 0, .22) 85%, rgba(0, 0, 0, .32) 94%); font-family: Roboto, "Noto Sans CJK KR", sans-serif; }
.top { display: flex; align-items: center; gap: 30px; padding: 26px 28px 0 22px; }
.top h2 { margin-right: auto; font-size: 34px; line-height: 36px; font-weight: 400; color: #eee; }
.top svg { display: block; width: 38px; height: 38px; }
.bottom { height: 75px; }
.progress { position: relative; height: 6px; margin: 0 30px; background: rgba(255, 255, 255, .2); }
.progress i { position: absolute; left: 0; top: 0; height: 6px; }
.loaded { width: 10.3%; background: #ccc; }
.progress .played { width: 9.7%; background: #f00; }
.controls { display: grid; grid-template-columns: 1fr auto 1fr; padding: 0 44px; }
.side { display: flex; align-items: center; height: 70px; padding-left: 18px; }
.side svg { display: block; }
.pause svg { width: 26px; height: 30px; }
.next { margin: 0 40px 0 50px; }
.next svg { width: 24px; height: 24px; }
.vol svg { width: 28px; height: 28px; }
.time { margin-left: 27px; font-size: 25px; color: #ddd; }
.more { display: flex; flex-direction: column; align-items: center; gap: 4px; font-size: 25px; line-height: 36px; padding-top: 7px; color: #ddd; }
.more svg { width: 14px; height: 8px; }
.right { justify-content: flex-end; gap: 32px; }
.right svg { width: 36px; height: 36px; }
```
